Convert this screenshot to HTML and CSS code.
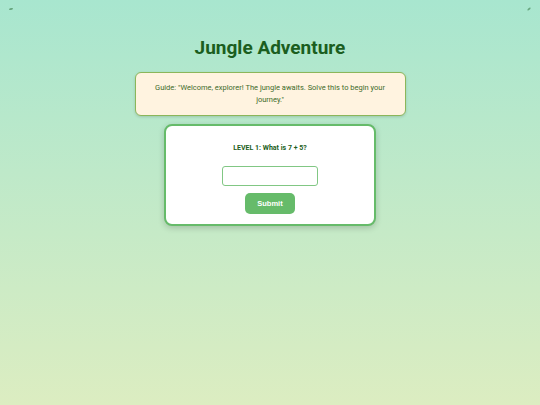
FILE: index.html
```html
<!DOCTYPE html>
<html>
<head>
<meta charset="utf-8">
<link rel="stylesheet" href="styles.css">
</head>
<body>
<span class="leaf leaf-left"></span>
<span class="leaf leaf-right"></span>
<div class="page">
  <h1 class="title">Jungle Adventure</h1>
  <div class="guide">Guide: "Welcome, explorer! The jungle awaits. Solve this to begin your journey."</div>
  <div class="card">
    <p class="question">LEVEL 1: What is 7 + 5?</p>
    <input class="answer" type="text">
    <button class="submit">Submit</button>
  </div>
</div>
</body>
</html>
```
FILE: styles.css
```css
html, body {
  margin: 0;
  padding: 0;
  height: 100%;
}
body {
  background: linear-gradient(to bottom, #a8e6cf 0%, #dcedc1 100%);
  font-family: Roboto, "Liberation Sans", sans-serif;
  position: relative;
  overflow: hidden;
}
.leaf {
  position: absolute;
  width: 4px;
  height: 2px;
  background: #4c8a5c;
  border-radius: 2px 0 2px 0;
  opacity: 0.7;
}
.leaf-left { left: 9px; top: 8px; }
.leaf-right { left: 527px; top: 8px; transform: rotate(-30deg); }
.page {
  display: flex;
  flex-direction: column;
  align-items: center;
  padding-top: 36px;
}
.title {
  margin: 0;
  font-size: 19px;
  font-weight: 700;
  color: #1b5e20;
  line-height: 24px;
}
.guide {
  margin-top: 12px;
  box-sizing: border-box;
  width: 271px;
  padding: 9px 12px;
  background: #fff3e0;
  border: 1px solid #8bb65a;
  border-radius: 6px;
  box-shadow: 0 1px 3px rgba(0,0,0,0.15);
  font-size: 7.5px;
  line-height: 12px;
  color: #3e6b2a;
  text-align: center;
}
.card {
  margin-top: 8px;
  box-sizing: border-box;
  width: 212px;
  height: 102px;
  background: #ffffff;
  border: 2px solid #66bb6a;
  border-radius: 8px;
  box-shadow: 0 2px 6px rgba(0,0,0,0.18);
  display: flex;
  flex-direction: column;
  align-items: center;
  padding-top: 17px;
}
.question {
  margin: 0;
  font-size: 7px;
  font-weight: 700;
  color: #1b5e20;
  line-height: 10px;
}
.answer {
  margin-top: 13px;
  box-sizing: border-box;
  width: 96px;
  height: 20px;
  border: 1px solid #81c784;
  border-radius: 3px;
  background: #fff;
  outline: none;
  padding: 0 4px;
}
.submit {
  margin-top: 7px;
  width: 50px;
  height: 21px;
  border: none;
  border-radius: 5px;
  background: #66bb6a;
  color: #ffffff;
  font-family: "Liberation Sans", Arial, sans-serif;
  font-weight: 700;
  font-size: 7.5px;
  padding: 0;
}
```
